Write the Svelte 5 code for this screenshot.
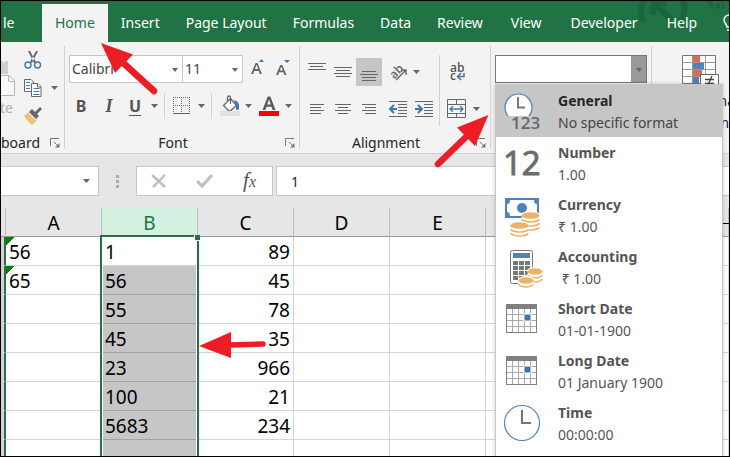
<script>
  const tabs = ["Insert", "Page Layout", "Formulas", "Data", "Review", "View", "Developer", "Help"];

  const formats = [
    { id: "general", name: "General", sample: "No specific format" },
    { id: "number", name: "Number", sample: "1.00" },
    { id: "currency", name: "Currency", sample: "₹ 1.00" },
    { id: "accounting", name: "Accounting", sample: " ₹ 1.00" },
    { id: "date", name: "Short Date", sample: "01-01-1900" },
    { id: "date", name: "Long Date", sample: "01 January 1900" },
    { id: "time", name: "Time", sample: "00:00:00" },
  ];

  const columns = ["A", "B", "C", "D", "E", "F", "G", ""];

  const rows = [
    ["56", "1", "89"],
    ["65", "56", "45"],
    ["", "55", "78"],
    ["", "45", "35"],
    ["", "23", "966"],
    ["", "100", "21"],
    ["", "5683", "234"],
    ["", "", ""],
  ];

  let current = $state("General");
  let formula = $state("1");
</script>

{#snippet caret(label)}
  <button class="caret" aria-label={label}>
    <svg width="7" height="4" viewBox="0 0 7 4"><path d="M0 0h7L3.5 4z" fill="#666" /></svg>
  </button>
{/snippet}

{#snippet launcher(label)}
  <button class="launcher" aria-label={label}>
    <svg width="10" height="10" viewBox="0 0 10 10" fill="none" stroke="#777">
      <path d="M.5 8V.5H9M4 4l4 4" />
      <path d="M9.500 5v4.500H5z" fill="#777" stroke="none" />
    </svg>
  </button>
{/snippet}

{#snippet lines(label, spec, pressed = false)}
  <button class="tool" class:pressed aria-label={label}>
    <svg width="26" height="28" viewBox="0 0 26 28" fill="#666">
      {#each spec as [x, y, w]}
        <rect {x} {y} width={w} height="1" />
      {/each}
    </svg>
  </button>
{/snippet}

{#snippet coins(x, y, w, n)}
  <g transform="translate({x} {y})">
    {#each Array(n) as _, i}
      {@const cy = 3 + (n - 1 - i) * 4}
      <ellipse cx={w / 2} {cy} rx={w / 2 + 1} ry="4" fill="#fff" />
      <path d="M0 {cy}a{w / 2} 3 0 0 0 {w} 0" fill="none" stroke="#ecb368" stroke-width="1.600" />
    {/each}
    <ellipse cx={w / 2} cy="3" rx={w / 2} ry="2.800" fill="#ecb368" />
  </g>
{/snippet}

{#snippet formatIcon(id)}
  <svg class="format-icon" width="56" height="52" viewBox="0 0 56 52">
    {#if id === "general"}
      <circle cx="22.500" cy="22.500" r="13.500" fill="#fff" stroke="#4a7fb8" stroke-width="1.200" />
      <path d="M22 12v10.500h7" fill="none" stroke="#777" stroke-width="2" />
      <path d="M7 31h32v14H7z" fill="#c6c6c6" />
      <text class="glyph" x="15" y="44" font-size="17" fill="#666">123</text>
    {:else if id === "number"}
      <text class="glyph thin" x="7" y="38" font-size="33" fill="#6b6b6b" stroke="#6b6b6b">12</text>
    {:else if id === "currency"}
      <rect x="9" y="9" width="34" height="20" fill="#4f81bd" />
      <path d="M14 11h24q0 4 3 4v8q-3 0-3 4H14q0-4-3-4v-8q3 0 3-4z" fill="#fff" />
      <circle cx="26" cy="19" r="5" fill="#4f81bd" />
      {@render coins(26, 23, 17, 4)}
      {@render coins(15, 33, 17, 3)}
    {:else if id === "accounting"}
      <rect x="14.500" y="9.500" width="22" height="33" rx="2" fill="#fff" stroke="#777" />
      <rect x="17" y="12" width="17" height="5" fill="#4f81bd" />
      {#each [20, 25, 30, 35] as y}
        {#each [17, 23, 29] as x}
          <rect {x} {y} width="5" height="4" fill="#777" />
        {/each}
      {/each}
      {@render coins(32, 27, 14, 3)}
      {@render coins(23, 36, 14, 2)}
    {:else if id === "date"}
      <rect x="10.500" y="11.500" width="30" height="28" fill="#fff" stroke="#808080" />
      <rect x="10" y="11" width="31" height="5" fill="#808080" />
      <path d="M16.500 16v23M22.500 16v23M28.500 16v23M34.500 16v23M11 21.500h29M11 27.500h29M11 33.500h29" stroke="#aaa" />
      <rect x="28" y="21" width="7" height="7" fill="#3f72ae" stroke="#fff" />
    {:else}
      <circle cx="26" cy="26" r="17.500" fill="#fff" stroke="#4f81bd" stroke-width="1.200" />
      <path d="M26 13v13h9" fill="none" stroke="#777" stroke-width="2" />
    {/if}
  </svg>
{/snippet}

<div class="window">
  <nav class="tabs">
    <svg class="watermark" width="100" height="41" viewBox="0 0 100 41" fill="none" stroke="#1d643c">
      <path d="M22 -8A21 21 0 0 0 15 21M48 -8A21 21 0 0 1 51 21" stroke-width="6" />
      <path d="M43 19L25 3M24 14V2h14" stroke-width="6" />
      <path d="M80 -2v6h5M87 5h8" stroke-width="5" stroke-dasharray="4 2" />
    </svg>
    <a class="tab file" href="#file" aria-label="File">le</a>
    <a class="tab active" href="#home">Home</a>
    {#each tabs as tab}
      <a class="tab" href="#{tab}">{tab}</a>
    {/each}
    <svg class="bulb" width="12" height="18" viewBox="0 0 12 18" fill="none" stroke="#fff" stroke-width="1.500">
      <path d="M4 13C4 10 1 9 1 6a5 5 0 0 1 10 0c0 3-3 4-3 7zM4 16h4" />
    </svg>
  </nav>

  <div class="ribbon">
    <section class="group clipboard">
      <div class="clip-tools">
        <button class="paste" aria-label="Paste">
          <svg width="32" height="38" viewBox="0 0 32 38">
            <path d="M0 3h25v13H0z" fill="#cfcdcf" />
            <path d="M20 0h2v5h-2z" fill="#f2f2f2" />
            <path d="M10.500 17.500H26l5.500 5.500v14.500h-21z" fill="#f8f8f8" stroke="#b5b5b5" />
            <path d="M25.500 17.500v6h6" fill="none" stroke="#b5b5b5" />
          </svg>
          <span>te</span>
        </button>
        <div class="clip-column">
          <button class="clip" aria-label="Cut">
            <svg width="18" height="18" viewBox="0 0 18 18" fill="none">
              <path d="M4 0l2 0 6 11-2 1zM14 0l-2 0-6 11 2 1z" fill="#666" />
              <circle cx="4" cy="14" r="3" stroke="#3f76b5" stroke-width="1.400" />
              <circle cx="13.500" cy="14" r="3" stroke="#3f76b5" stroke-width="1.400" />
            </svg>
          </button>
          <div class="pair">
            <button class="clip" aria-label="Copy">
              <svg width="18" height="18" viewBox="0 0 18 18" stroke="#666" fill="#fff">
                <path d="M.5.5H7L9.500 3v9.500h-9z" />
                <path d="M2 3.500h4M2 6.500h4M2 9.500h4" stroke="#3f76b5" />
                <path d="M7.500 4.500H14l3 3v10H7.500z" />
                <path d="M13.500 4.500V8H17" />
                <path d="M9.500 9.500h6M9.500 12.500h6M9.500 15.500h6" stroke="#3f76b5" />
              </svg>
            </button>
            {@render caret("Copy options")}
          </div>
          <button class="clip" aria-label="Format Painter">
            <svg width="18" height="18" viewBox="0 0 18 18">
              <path d="M0 9l5-4 8 8-5 5q-3-2-4-4-2-2-4-5z" fill="#f0c078" />
              <path d="M5 5l3-3 7 7-3 3z" fill="#666" />
              <path d="M10 6l6-6 2 2-6 6z" fill="#666" />
              <path d="M5 6l7 7" stroke="#fff" />
            </svg>
          </button>
        </div>
      </div>
      <footer><span>board</span>{@render launcher("Clipboard settings")}</footer>
    </section>

    <section class="group font">
      <div class="row">
        <div class="combo name">
          <select aria-label="Font"><option>Calibri</option></select>
        </div>
        <div class="combo size">
          <select aria-label="Font size"><option>11</option></select>
        </div>
        <button class="tool grow" aria-label="Increase font size">
          <svg width="26" height="28" viewBox="0 0 26 28">
            <path d="M5 19L9.500 8h2L16 19h-2.200l-1-3H8.200l-1 3zM8.900 14h3.300L10.500 9.700z" fill="#666" />
            <path d="M13 7l2.500-3L18 7z" fill="#3f76b5" />
          </svg>
        </button>
        <button class="tool" aria-label="Decrease font size">
          <svg width="26" height="28" viewBox="0 0 26 28">
            <path d="M4 20L8.300 10h2L14.500 20h-2.100l-1-2.700H7.100L6.200 20zM7.800 15.500h3L9.300 11.600z" fill="#666" />
            <path d="M12 5h6l-3 3z" fill="#3f76b5" />
          </svg>
        </button>
      </div>
      <div class="row second">
        <button class="tool letter bold">B</button>
        <button class="tool letter italic">I</button>
        <button class="tool letter underline">U</button>
        {@render caret("Underline style")}
        <span class="rule"></span>
        <button class="tool" aria-label="Borders">
          <svg width="26" height="28" viewBox="0 0 26 28" fill="none" stroke="#666">
            <path d="M5 5.500h17M5.500 5v16M13.500 5v16M21.500 5v16M5 13.500h17" stroke-dasharray="1 1" />
            <path d="M5 21.500h17" />
          </svg>
        </button>
        {@render caret("Border options")}
        <span class="rule"></span>
        <button class="tool" aria-label="Fill color">
          <svg width="26" height="28" viewBox="0 0 26 28">
            <path d="M8.500 13.500l7-7 6 7-7 6z" fill="#fff" stroke="#666" stroke-width="1.300" />
            <path d="M12.500 9V5.500q0-1.500 1.500-1.500t1.500 1.500V12" fill="none" stroke="#666" stroke-width="1.300" />
            <path d="M19 8q6 1 5 9-2 2-3 0v-4z" fill="#3f76b5" />
            <path d="M5 19h20v5H5z" fill="#e1e1e1" />
          </svg>
        </button>
        {@render caret("Fill options")}
        <button class="tool" aria-label="Font color">
          <svg width="26" height="28" viewBox="0 0 26 28">
            <path d="M7.500 18L12.700 4.500h2.600L20.500 18h-2.800l-1.200-3.300h-5L10.300 18zM12.200 12.500h3.600L14 7.300z" fill="#5a5a5a" />
            <path d="M4 19h20v5H4z" fill="#fe0000" />
          </svg>
        </button>
        {@render caret("Font color options")}
      </div>
      <footer><span>Font</span>{@render launcher("Font settings")}</footer>
    </section>

    <section class="group alignment">
      <div class="align-tools">
        <div>
          <div class="row">
            {@render lines("Top align", [[4, 5, 18], [6, 8, 13], [4, 11, 18]])}
            {@render lines("Middle align", [[4, 9, 18], [6, 12, 14], [4, 15, 18], [6, 18, 14]])}
            {@render lines("Bottom align", [[6, 13, 14], [4, 16, 18], [6, 19, 14], [6, 22, 14]], true)}
            <button class="tool narrow" aria-label="Orientation">
              <svg width="22" height="28" viewBox="0 0 22 28">
                <text class="glyph" x="-8" y="4" font-size="12" fill="#666" transform="translate(10 13) rotate(-45)">ab</text>
                <path d="M9 22L19 12M14 12h5v5" fill="none" stroke="#666" stroke-width="1.400" />
              </svg>
            </button>
            {@render caret("Orientation options")}
          </div>
          <div class="row second">
            {@render lines("Align left", [[6, 9, 14], [6, 12, 11], [6, 15, 14], [6, 18, 11]])}
            {@render lines("Center", [[5, 9, 16], [8, 12, 10], [5, 15, 16], [8, 18, 10]])}
            {@render lines("Align right", [[6, 9, 14], [9, 12, 11], [6, 15, 14], [9, 18, 11]])}
            <button class="tool indent" aria-label="Decrease indent">
              <svg width="26" height="28" viewBox="0 0 26 28" fill="none" stroke="#666">
                <path d="M3 6.500h18M12 9.500h9M12 12.500h9M12 15.500h9M12 18.500h9M3 21.500h18" />
                <path d="M11 14H4M8 10l-4 4 4 4" stroke="#3f76b5" stroke-width="2" />
              </svg>
            </button>
            <button class="tool" aria-label="Increase indent">
              <svg width="26" height="28" viewBox="0 0 26 28" fill="none" stroke="#666">
                <path d="M3 6.500h18M12 9.500h9M12 12.500h9M12 15.500h9M12 18.500h9M3 21.500h18" />
                <path d="M3 14h7M6 10l4 4-4 4" stroke="#3f76b5" stroke-width="2" />
              </svg>
            </button>
          </div>
        </div>
        <span class="rule tall"></span>
        <div>
          <div class="row">
            <button class="tool" aria-label="Wrap text">
              <svg width="26" height="28" viewBox="0 0 26 28">
                <text class="glyph" x="7" y="14" font-size="12" fill="#555">ab</text>
                <text class="glyph" x="7" y="22" font-size="12" fill="#555">c</text>
                <path d="M21 15v3.500h-6M18 15l-3.500 3.500L18 22" fill="none" stroke="#3f76b5" stroke-width="1.500" />
              </svg>
            </button>
          </div>
          <div class="row second">
            <button class="tool" aria-label="Merge and center">
              <svg width="26" height="28" viewBox="0 0 26 28" fill="none" stroke="#666">
                <path d="M4.500 4.500h18v18h-18zM4.500 9.500h18M4.500 18.500h18M13.500 4.500v5M13.500 18.500v4" />
                <path d="M6 10h15v8H6z" fill="#fff" stroke="none" />
                <path d="M7 14h13M10 11l-3 3 3 3M17 11l3 3-3 3" stroke="#3f76b5" stroke-width="1.300" />
              </svg>
            </button>
            {@render caret("Merge options")}
          </div>
        </div>
      </div>
      <footer><span>Alignment</span>{@render launcher("Alignment settings")}</footer>
    </section>

    <section class="group number">
      <div class="combo format">
        <select aria-label="Number format"><option></option></select>
      </div>
      <div class="menu" role="listbox" aria-label="Number formats">
        {#each formats as format}
          <button
            class="format-item"
            class:current={current === format.name}
            role="option"
            aria-selected={current === format.name}
            onclick={() => (current = format.name)}
          >
            {@render formatIcon(format.id)}
            <span class="format-text">
              <b>{format.name}</b>
              <span>{format.sample}</span>
            </span>
          </button>
        {/each}
      </div>
    </section>

    <section class="group styles">
      <button class="conditional">
        <svg width="38" height="34" viewBox="0 0 38 34">
          <path d="M.500.500h33v28H.500z" fill="#fff" stroke="#777" />
          <path d="M1 7.500h32M1 14.500h32M1 21.500h32M10.500 1v27M23.500 1v27" stroke="#999" />
          <path d="M11 1h7v6h-7zM11 15h9v6h-9z" fill="#e06656" />
          <path d="M11 8h11v6H11zM11 22h6v6h-6z" fill="#4f81bd" />
          <path d="M18.500 19.500h18v14h-18z" fill="#fff" stroke="#666" />
          <path d="M23 24.500h9M23 28.500h9M30 21l-5 11" stroke="#444" stroke-width="1.400" />
        </svg>
        <span>Conditional Formatting</span>
      </button>
    </section>
  </div>

  <div class="formula-bar">
    <div class="name-box">{@render caret("Name box")}</div>
    <div class="dots"><i></i><i></i><i></i></div>
    <div class="fx">
      <button aria-label="Cancel">
        <svg width="16" height="16" viewBox="0 0 16 16"><path d="M1 2l13 12M14 2L2 14" stroke="#bdbdbd" stroke-width="2.400" /></svg>
      </button>
      <button aria-label="Enter">
        <svg width="18" height="16" viewBox="0 0 18 16"><path d="M1 8l5 5L16 2" fill="none" stroke="#bdbdbd" stroke-width="3" /></svg>
      </button>
      <button class="insert-function" aria-label="Insert function">f<small>x</small></button>
    </div>
    <input class="formula" aria-label="Formula" bind:value={formula} />
  </div>

  <div class="sheet">
    <table>
      <colgroup>
        <col class="head-col" />
        {#each columns as column}
          <col class:data-col={column} />
        {/each}
      </colgroup>
      <thead>
        <tr>
          <th></th>
          {#each columns as column}
            <th class:active={column === "B"}>{column}</th>
          {/each}
        </tr>
      </thead>
      <tbody>
        {#each rows as row, r}
          <tr>
            <th></th>
            {#each columns as column, c}
              <td
                class:flagged={column === "A" && row[0]}
                class:filled={column === "B" && r > 0}
                class:right={column === "C"}>{row[c] ?? ""}</td
              >
            {/each}
          </tr>
        {/each}
      </tbody>
    </table>
    <div class="edge"></div>
    <div class="selection"><i></i></div>
  </div>

  <svg class="arrows" width="500" height="360" viewBox="0 0 500 360" fill="#ee1c25" stroke="#ee1c25">
    <path d="M101 43L133 54.500 115 73z" stroke="none" />
    <path d="M120 60L154 91" stroke-width="6.500" stroke-linecap="round" />
    <path d="M488.500 115L475 146 457 127.500z" stroke="none" />
    <path d="M469 134L438 164" stroke-width="6.500" stroke-linecap="round" />
    <path d="M199 346L231 332v26z" stroke="none" />
    <path d="M228 345L263 344" stroke-width="5.500" stroke-linecap="round" />
  </svg>
</div>

<style>
  :global(body) {
    margin: 0;
  }

  .window {
    position: relative;
    display: flex;
    flex-direction: column;
    box-sizing: border-box;
    height: 100vh;
    border: 1px solid #000;
    overflow: hidden;
    background: #fff;
    color: #262626;
    font: 14px/20px "Noto Sans", "Open Sans", sans-serif;
  }

  button,
  select,
  input {
    margin: 0;
    border: 0;
    padding: 0;
    background: none;
    color: inherit;
    font: inherit;
  }

  svg {
    display: block;
    flex: none;
  }

  .glyph {
    font-family: "Open Sans", "Noto Sans", sans-serif;
    font-weight: 600;
  }

  .glyph.thin {
    font-weight: 400;
  }

  .tabs {
    position: relative;
    display: flex;
    flex: none;
    height: 41px;
    padding-top: 3px;
    box-sizing: border-box;
    background: #217346;
    overflow: hidden;
  }

  .watermark {
    position: absolute;
    top: 0;
    right: 0;
  }

  .tab {
    position: relative;
    flex: none;
    padding: 0 13px;
    color: #fff;
    line-height: 38px;
    text-decoration: none;
    white-space: nowrap;
  }

  .tab:nth-last-of-type(-n + 3) {
    padding: 0 14px 0 15px;
  }

  .tab.file {
    box-sizing: border-box;
    width: 41px;
    padding: 0 0 0 2px;
  }

  .tab.active {
    background: #f3f3f3;
    color: #217346;
  }

  .bulb {
    position: relative;
    margin: 10px 0 0 12px;
  }

  .ribbon {
    display: flex;
    flex: none;
    height: 111px;
    border-bottom: 1px solid #d2d2d2;
    background: #f3f3f3;
  }

  .group {
    display: flex;
    flex: none;
    flex-direction: column;
    box-sizing: border-box;
    margin: 4px 0;
    border-right: 1px solid #d2d2d2;
    padding-top: 9px;
  }

  .clipboard {
    width: 64px;
    padding-top: 4px;
  }

  .font {
    width: 235px;
    padding-left: 4px;
  }

  .alignment {
    width: 191px;
    padding-left: 4px;
  }

  .number {
    position: relative;
    width: 161px;
    padding-left: 4px;
  }

  .styles {
    flex: 1;
    border: 0;
    overflow: hidden;
  }

  footer {
    display: flex;
    align-items: center;
    margin-top: auto;
    padding-right: 4px;
    line-height: 12px;
  }

  footer span {
    flex: 1;
    padding-right: 8px;
    text-align: center;
  }

  .clipboard footer span {
    padding: 0;
    text-align: left;
  }

  .row,
  .pair,
  .align-tools,
  .clip-tools {
    display: flex;
    align-items: center;
  }

  .row {
    height: 28px;
  }

  .second {
    margin-top: 9px;
  }

  .font .second {
    margin-left: -2px;
  }

  .clip-tools {
    justify-content: flex-end;
    height: 76px;
    overflow: hidden;
  }

  .clip-column {
    display: flex;
    flex: none;
    flex-direction: column;
    gap: 10px;
    width: 40px;
  }

  .clip {
    width: 18px;
  }

  .pair {
    gap: 3px;
  }

  .paste {
    display: flex;
    flex: none;
    flex-direction: column;
    align-items: flex-end;
    gap: 2px;
    margin-right: 9px;
    color: #b1b1b1;
  }

  .paste span {
    padding-right: 2px;
  }

  .combo {
    position: relative;
    box-sizing: border-box;
    height: 28px;
    border: 1px solid #c6c6c6;
    background: #fff;
  }

  .combo::after {
    content: "";
    position: absolute;
    top: 12px;
    right: 4px;
    border: 3px solid transparent;
    border-top: 4px solid #666;
    border-bottom: 0;
    pointer-events: none;
  }

  .combo select {
    width: 100%;
    height: 100%;
    padding-left: 2px;
    appearance: none;
    color: #444;
  }

  .name {
    width: 114px;
  }

  .size {
    width: 61px;
    margin-left: -1px;
  }

  .format {
    flex: none;
    width: 152px;
    border-color: #777;
  }

  .format select {
    border-right: 15px solid #999;
  }

  .tool {
    display: flex;
    align-items: center;
    justify-content: center;
    width: 26px;
    height: 28px;
  }

  .tool.narrow {
    width: 22px;
    margin-left: 5px;
  }

  .tool.grow {
    margin-left: 3px;
  }

  .tool.indent {
    margin-left: 4px;
  }

  .pressed {
    background: #c6c6c6;
  }

  .letter {
    width: 28px;
    color: #555;
    font-weight: bold;
    font-size: 16px;
  }

  .italic {
    font-family: "Liberation Serif", serif;
    font-style: italic;
    font-size: 18px;
  }

  .underline {
    width: 24px;
    text-decoration: underline;
    text-underline-offset: 3px;
  }

  .caret {
    display: flex;
    align-items: center;
    justify-content: center;
    width: 14px;
    height: 28px;
  }

  .pair .caret {
    width: 20px;
    height: 18px;
  }

  .rule {
    width: 1px;
    height: 26px;
    margin: 0 3px;
    background: #d2d2d2;
  }

  .rule.tall {
    height: 71px;
    margin: 0 3px 0 1px;
  }

  .menu {
    position: absolute;
    z-index: 2;
    top: 38px;
    left: 4px;
    width: 226px;
    border: 1px solid #c6c6c6;
    padding-bottom: 16px;
    background: #fff;
    box-shadow: 0 0 4px rgb(0 0 0 / 20%);
  }

  .format-item {
    display: flex;
    width: 100%;
    height: 52px;
    color: #555;
    text-align: left;
  }

  .format-icon {
    margin-right: 6px;
  }

  .format-text {
    display: flex;
    flex-direction: column;
    padding-top: 5px;
    line-height: 22px;
    white-space: pre;
  }

  .current {
    background: #c6c6c6;
    color: #444;
  }

  .current b {
    color: #262626;
  }

  .conditional {
    display: flex;
    flex-direction: column;
    align-items: center;
    flex: none;
    width: 98px;
    padding: 0 10px;
    line-height: 22px;
  }

  .conditional span {
    padding-top: 1px;
  }

  .formula-bar {
    display: flex;
    flex: none;
    padding: 12px 0;
    background: #e6e6e6;
  }

  .name-box,
  .fx,
  .formula {
    box-sizing: border-box;
    height: 30px;
    border: 1px solid #c6c6c6;
    background: #fff;
  }

  .name-box {
    display: flex;
    align-items: center;
    justify-content: flex-end;
    width: 98px;
    border-left: 0;
    padding-right: 5px;
  }

  .dots {
    display: flex;
    flex-direction: column;
    align-items: center;
    justify-content: center;
    gap: 2px;
    width: 37px;
  }

  .dots i {
    width: 3px;
    height: 3px;
    background: #aaa;
  }

  .fx {
    display: flex;
    align-items: center;
    justify-content: space-between;
    width: 137px;
    padding: 0 16px 0 14px;
  }

  .insert-function {
    color: #555;
    font: italic 21px/20px "Liberation Serif", serif;
  }

  .insert-function small {
    font-size: 16px;
  }

  .formula {
    flex: 1;
    min-width: 0;
    margin-left: 3px;
    border-right: 0;
    padding-left: 14px;
  }

  .sheet {
    position: relative;
    flex: 1;
  }

  table {
    width: 100%;
    border-spacing: 0;
    table-layout: fixed;
    color: #000;
    font-size: 19px;
  }

  .head-col {
    width: 5px;
  }

  .data-col {
    width: 96px;
  }

  th,
  td {
    box-sizing: border-box;
    height: 29px;
    border-right: 1px solid #d4d4d4;
    border-bottom: 1px solid #d4d4d4;
    padding: 2px 3px 0;
    font-weight: normal;
    line-height: 26px;
  }

  thead th {
    border-right-color: #bbb;
    border-bottom-color: #999;
    background: #e6e6e6;
  }

  thead .active {
    background: #d3f0e0;
    color: #217346;
  }

  tbody th {
    padding: 0;
    border-right: 2px solid #217346;
    background: #d9cfd2;
  }

  .flagged {
    background: linear-gradient(135deg, #008000 6px, transparent 6px);
  }

  .filled {
    border-bottom-color: #a2a2a2;
    background: #c6c6c6;
  }

  .right {
    text-align: right;
  }

  .edge {
    position: absolute;
    top: 15px;
    right: 0;
    width: 6px;
    height: 1px;
    background: #000;
  }

  .selection {
    position: absolute;
    top: 27px;
    bottom: -2px;
    left: 99px;
    box-sizing: border-box;
    width: 99px;
    border: 2px solid #217346;
    box-shadow: inset 1px 0 #fff, inset -1px 0 #fff;
  }

  .selection i {
    position: absolute;
    top: -2px;
    right: -3px;
    width: 5px;
    height: 5px;
    border: solid #fff;
    border-width: 0 0 1px 1px;
    background: #217346;
  }

  .arrows {
    position: absolute;
    z-index: 3;
    top: -1px;
    left: -1px;
    pointer-events: none;
  }
</style>
